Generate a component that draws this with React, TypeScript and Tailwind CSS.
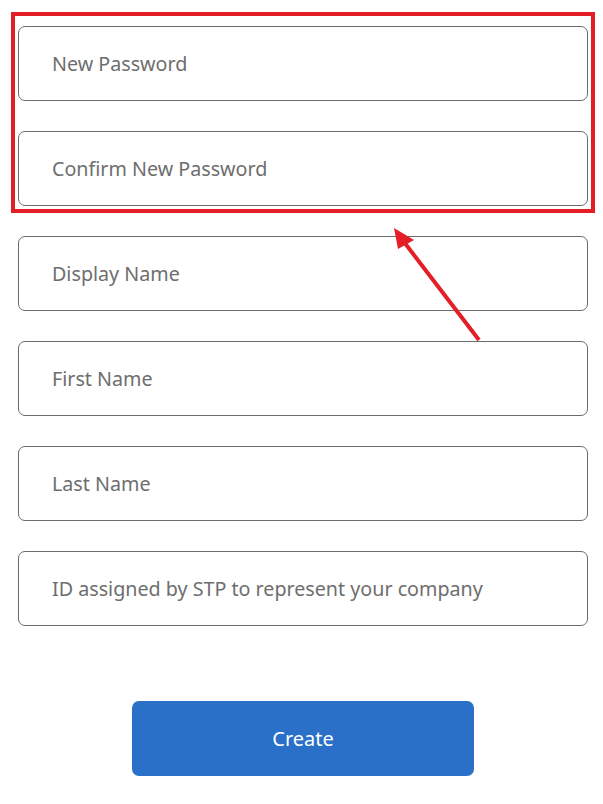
const fields = [
  "New Password",
  "Confirm New Password",
  "Display Name",
  "First Name",
  "Last Name",
  "ID assigned by STP to represent your company",
];

export default function App() {
  return (
    <div className="relative w-[603px] h-[804px] bg-white overflow-hidden font-['Noto_Sans',sans-serif]">
      <div className="pt-[26px] pl-[18px] w-[588px] flex flex-col gap-[30px]">
        {fields.map((f) => (
          <input
            key={f}
            type="text"
            placeholder={f}
            className="h-[75px] w-[570px] rounded-[7px] border border-[#6b6b6b] bg-white pl-[33px] text-[19.7px] text-[#333] placeholder:text-[#6e6e6e] outline-none"
          />
        ))}
        <div className="mt-[45px] flex justify-center">
          <button className="h-[75px] w-[342px] rounded-[7px] bg-[#2a6fc8] text-[20px] text-white">
            Create
          </button>
        </div>
      </div>

      {/* red highlight box */}
      <div className="absolute left-[11px] top-[12px] w-[584px] h-[201px] border-4 border-[#e41e26] pointer-events-none" />

      {/* arrow */}
      <svg className="absolute left-0 top-0 pointer-events-none" width="603" height="804">
        <line x1="479" y1="340" x2="404" y2="242" stroke="#e41e26" strokeWidth="4" />
        <polygon points="394,228 414,240 398,249" fill="#e41e26" />
      </svg>
    </div>
  );
}
